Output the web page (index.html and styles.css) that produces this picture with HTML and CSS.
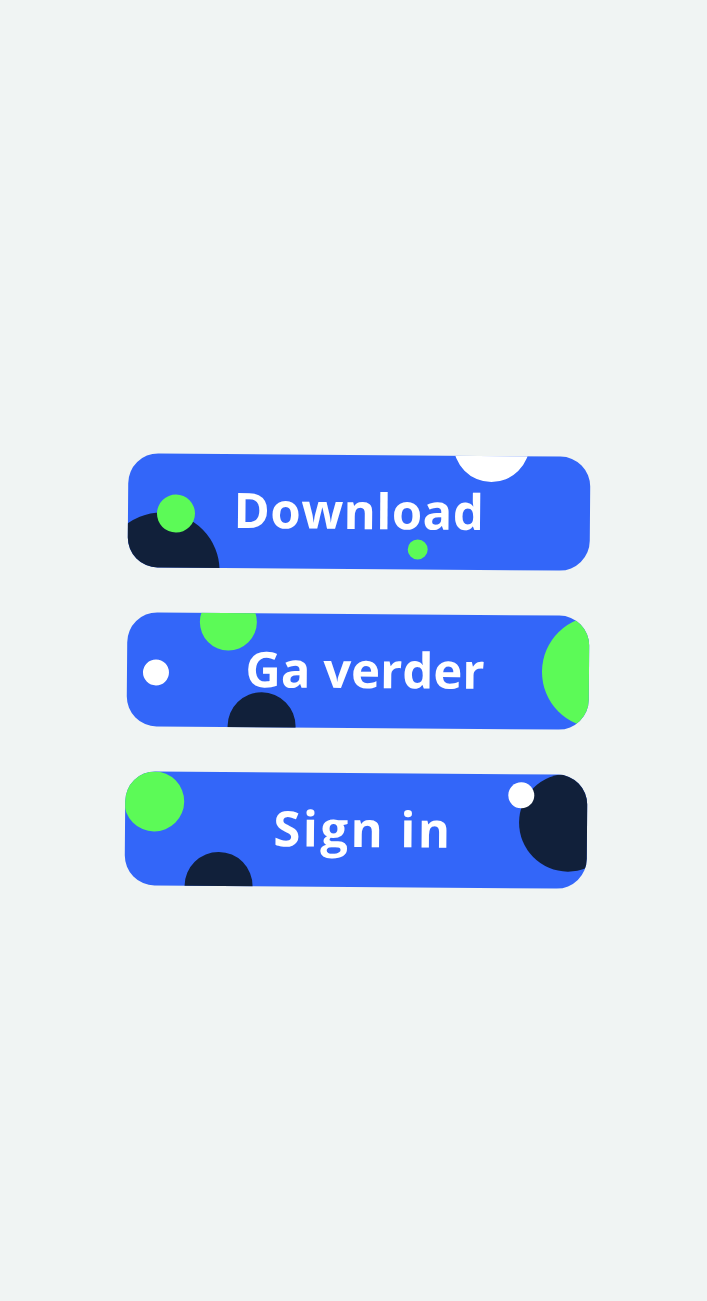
FILE: index.html
```html
<!DOCTYPE html>
<html lang="nl">
<head>
<meta charset="utf-8">
<title>Buttons</title>
<link rel="stylesheet" href="styles.css">
</head>
<body>
<main class="stack">
  <a class="btn btn--one" href="#">
    <span class="dot navy" style="left:34px;top:117px;width:116px;height:116px"></span>
    <span class="dot green" style="left:48px;top:60px;width:38px;height:38px"></span>
    <span class="dot green" style="left:290px;top:94px;width:20px;height:20px"></span>
    <span class="dot white" style="left:363px;top:-12px;width:76px;height:76px"></span>
    <span class="label">Download</span>
  </a>
  <a class="btn btn--two" href="#">
    <span class="dot green" style="left:101px;top:9px;width:57px;height:57px"></span>
    <span class="dot white" style="left:29px;top:60px;width:26px;height:26px"></span>
    <span class="dot navy" style="left:135px;top:113px;width:68px;height:68px"></span>
    <span class="dot green" style="left:471px;top:56px;width:112px;height:112px"></span>
    <span class="label">Ga verder</span>
  </a>
  <a class="btn btn--three" href="#">
    <span class="dot green" style="left:29px;top:30px;width:60px;height:60px"></span>
    <span class="dot navy" style="left:94px;top:114px;width:68px;height:68px"></span>
    <span class="dot navy" style="left:443px;top:48px;width:98px;height:98px"></span>
    <span class="dot white" style="left:396px;top:21px;width:26px;height:26px"></span>
    <span class="label">Sign in</span>
  </a>
</main>
</body>
</html>
```

FILE: styles.css
```css
html, body {
  margin: 0;
  padding: 0;
}
body {
  background: #f0f4f3;
  width: 707px;
  height: 1301px;
  overflow: hidden;
  font-family: "Open Sans", "Liberation Sans", sans-serif;
}
.stack {
  display: flex;
  flex-direction: column;
  align-items: center;
  gap: 45px;
  padding-top: 455px;
  padding-left: 11px;
}
.btn {
  position: relative;
  display: flex;
  align-items: center;
  justify-content: center;
  width: 462px;
  height: 114px;
  border-radius: 30px;
  background: #3366f9;
  overflow: hidden;
  text-decoration: none;
  transform: rotate(0.45deg);
}
.btn--one { transform: rotate(0.45deg); }
.btn--two { transform: translateX(-1px) rotate(0.45deg); }
.btn--three { transform: translateX(-3px) rotate(0.45deg); }
.btn--two .label { padding-left: 14px; letter-spacing: 0; }
.btn--three .label { padding-left: 14px; letter-spacing: 2.5px; }
.label {
  position: relative;
  color: #ffffff;
  font-weight: 700;
  font-size: 49px;
  letter-spacing: 0.5px;
  line-height: 1;
  margin-top: -4px;
}
.dot {
  position: absolute;
  border-radius: 50%;
  transform: translate(-50%, -50%);
}
.navy { background: #11203a; }
.green { background: #5cfa57; }
.white { background: #ffffff; }
```
